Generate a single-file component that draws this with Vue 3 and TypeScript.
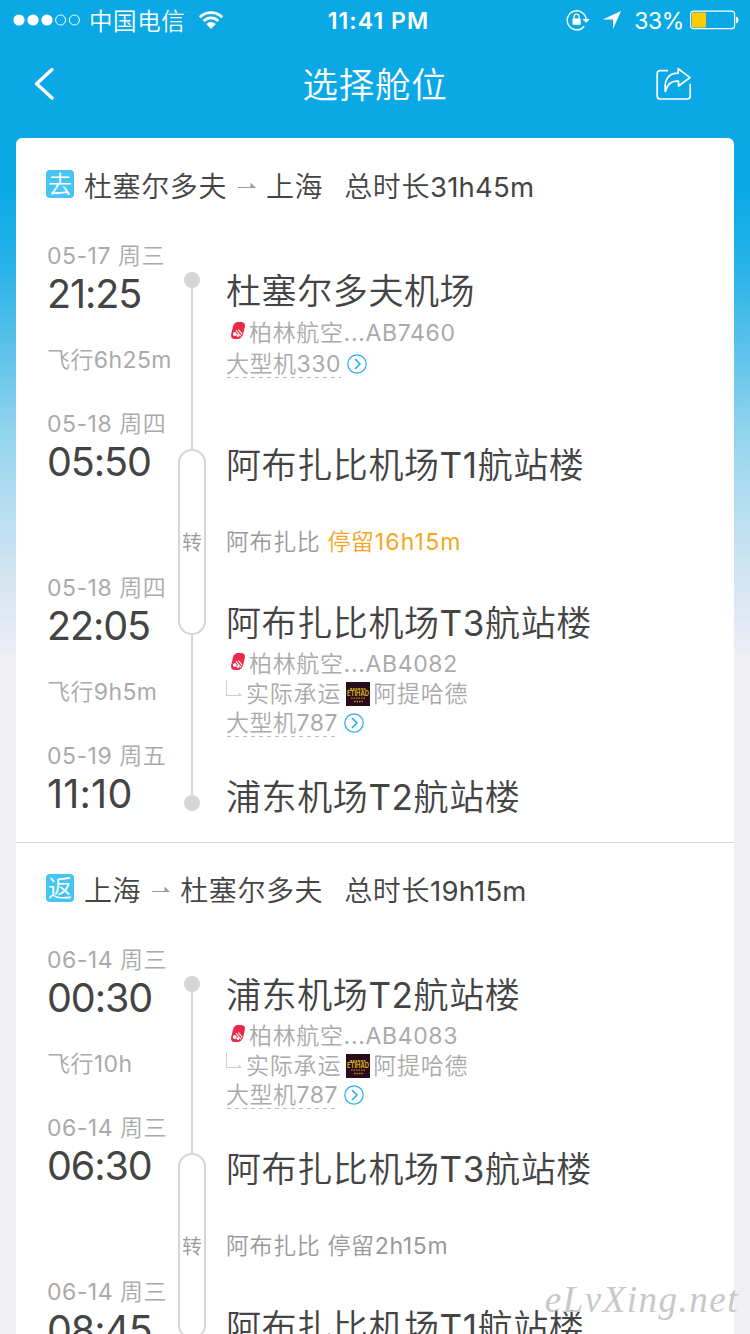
<script setup lang="ts">
import { h, type FunctionalComponent } from 'vue'

interface Stop {
  date: string
  time: string
  place: string
  kind: 'depart' | 'arrive'
  flying?: string
  flight?: string
  plane?: string
  operated?: boolean
  city?: string
  stay?: string
  longStay?: boolean
}

interface Trip {
  badge: string
  from: string
  to: string
  total: string
  stops: Stop[]
}

// Latin letters and digits get their own weight inside Chinese text.
const Mixed: FunctionalComponent<{ text: string }> = (props) =>
  h(
    'span',
    props.text
      .split(/([\x20-\x7e]+)/)
      .filter(Boolean)
      .map((run) => (/^[\x20-\x7e]/.test(run) ? h('span', { class: 'latin' }, run) : run)),
  )
Mixed.props = ['text']

const trips: Trip[] = [
  {
    badge: '去',
    from: '杜塞尔多夫',
    to: '上海',
    total: '31h45m',
    stops: [
      { date: '05-17 周三', time: '21:25', place: '杜塞尔多夫机场', kind: 'depart', flying: '6h25m', flight: 'AB7460', plane: '330' },
      { date: '05-18 周四', time: '05:50', place: '阿布扎比机场T1航站楼', kind: 'arrive', city: '阿布扎比', stay: '16h15m', longStay: true },
      { date: '05-18 周四', time: '22:05', place: '阿布扎比机场T3航站楼', kind: 'depart', flying: '9h5m', flight: 'AB4082', plane: '787', operated: true },
      { date: '05-19 周五', time: '11:10', place: '浦东机场T2航站楼', kind: 'arrive' },
    ],
  },
  {
    badge: '返',
    from: '上海',
    to: '杜塞尔多夫',
    total: '19h15m',
    stops: [
      { date: '06-14 周三', time: '00:30', place: '浦东机场T2航站楼', kind: 'depart', flying: '10h', flight: 'AB4083', plane: '787', operated: true },
      { date: '06-14 周三', time: '06:30', place: '阿布扎比机场T3航站楼', kind: 'arrive', city: '阿布扎比', stay: '2h15m' },
      { date: '06-14 周三', time: '08:45', place: '阿布扎比机场T1航站楼', kind: 'depart' },
    ],
  },
]
</script>

<template>
  <div class="screen">
    <header>
      <div class="status">
        <div class="carrier">
          <svg width="68" height="12" viewBox="0 0 68 12">
            <circle cx="6" cy="6" r="5.6" fill="#fff" />
            <circle cx="20" cy="6" r="5.6" fill="#fff" />
            <circle cx="34" cy="6" r="5.6" fill="#fff" />
            <circle cx="47.6" cy="6" r="5" fill="none" stroke="#fff" />
            <circle cx="61.4" cy="6" r="5" fill="none" stroke="#fff" />
          </svg>
          <span class="operator">中国电信</span>
          <svg class="wifi" width="26" height="20" viewBox="0 0 26 20">
            <path d="M1.8 7.2a15.8 15.8 0 0 1 22.4 0M5.7 11a10.3 10.3 0 0 1 14.6 0" fill="none" stroke="#fff" stroke-width="2.7" />
            <path d="M8.2 14a6.8 6.8 0 0 1 9.6 0L13 19z" fill="#fff" />
          </svg>
        </div>
        <div class="clock">11:41 PM</div>
        <div class="power">
          <svg width="24" height="22" viewBox="0 0 24 22">
            <path d="M18.2 17.2A9.500 9.500 0 1 1 20.2 10.500" fill="none" stroke="#fff" stroke-width="1.4" />
            <path d="M16.4 10h7.4L20.1 13.8z" fill="#fff" />
            <rect x="6.5" y="9.6" width="8.2" height="6.2" rx=".6" fill="#fff" />
            <path d="M8.100 10V7.700a2.500 2.500 0 0 1 5 0V10" fill="none" stroke="#fff" stroke-width="1.2" />
          </svg>
          <svg class="locate" width="20" height="20" viewBox="0 0 20 20">
            <path d="M19 1 11 19V9.400H.8z" fill="#fff" />
          </svg>
          <span class="percent">33%</span>
          <svg class="battery" width="49" height="20" viewBox="0 0 49 20">
            <rect x=".6" y="1.1" width="44" height="17.6" rx="3" fill="none" stroke="#fff" stroke-width="1.2" />
            <rect x="2" y="2.5" width="14" height="15" rx="1" fill="#fc0" />
            <path d="M46 6.7q2.4 0 2.4 3.3T46 13.3z" fill="#fff" />
          </svg>
        </div>
      </div>
      <div class="nav">
        <svg class="back" width="22" height="34" viewBox="0 0 22 34">
          <path d="M20 2.6 4.6 16.8 20 31" fill="none" stroke="#fff" stroke-width="3.4" stroke-linecap="round" stroke-linejoin="round" />
        </svg>
        <h1>选择舱位</h1>
        <svg class="share" width="36" height="34" viewBox="0 0 36 34">
          <path d="M12 3.6H4.2q-3 0-3 3V29q0 3 3 3h27q3 0 3-3V16.8" fill="none" stroke="#fff" stroke-width="1.7" />
          <path d="M22.2 1.7 34 10.6 22.5 19v-4.8Q12.5 12.8 9.3 24.4 7.5 6.3 22.2 6.2z" fill="none" stroke="#fff" stroke-width="1.7" stroke-linejoin="round" />
        </svg>
      </div>
    </header>

    <main>
      <section v-for="trip in trips" :key="trip.badge" class="trip">
        <div class="summary">
          <span class="badge">{{ trip.badge }}</span>
          <span>{{ trip.from }}</span>
          <svg class="arrow" width="20" height="8" viewBox="0 0 20 8">
            <path d="M1 6.5H18.5" stroke="#999" fill="none" />
            <path d="M13.5 6.500V1.500L18.500 6.500z" fill="#999" />
          </svg>
          <span>{{ trip.to }}</span>
          <span class="total">总时长<b>{{ trip.total }}</b></span>
        </div>

        <div class="route">
          <div class="rail">
            <i class="dot"></i>
            <i class="line"></i>
            <div class="transfer"><span>转</span></div>
            <i class="line"></i>
            <i class="dot"></i>
          </div>
          <div v-for="(stop, n) in trip.stops" :key="n" class="stop" :class="stop.kind">
            <div class="when">
              <div class="date"><Mixed :text="stop.date" /></div>
              <div class="time" :class="{ narrow: stop.time.startsWith('11') }">{{ stop.time }}</div>
              <div v-if="stop.flying" class="flying"><Mixed :text="'飞行' + stop.flying" /></div>
            </div>
            <div class="where">
              <h2><Mixed :text="stop.place" /></h2>
              <div v-if="stop.flight" class="details" :class="{ compact: stop.operated }">
                <div class="row airline">
                  <svg width="16" height="20" viewBox="0 0 16 20">
                    <path d="M8 1h3.5q4.3.3 3.3 5l-1.6 7q-1.4 5-5.7 5H5Q.6 18 1.1 13.5L3 5.5Q4.2 1 8 1z" fill="#ec2a48" />
                    <path d="M5.8 9l5.4 6.5M8.3 8.5l4 4.8" stroke="#fff" stroke-width="1.1" />
                    <circle cx="4.8" cy="13" r="1.9" fill="#fff" />
                    <circle cx="8" cy="14.6" r="1.4" fill="#fff" />
                  </svg>
                  <Mixed :text="'柏林航空...' + stop.flight" />
                </div>
                <div v-if="stop.operated" class="row operated">
                  <svg class="elbow" width="17" height="17" viewBox="0 0 17 17">
                    <path d="M.5 0V15.5H15.5" fill="none" stroke="#d0d0d0" />
                    <path d="M12.5 12.5l3.5 3h-3.5z" fill="#d0d0d0" />
                  </svg>
                  <span>实际承运</span>
                  <svg class="etihad" width="24" height="24" viewBox="0 0 24 24">
                    <rect width="24" height="24" fill="#2a0b1c" />
                    <path d="M4 7h16" stroke="#b79210" stroke-width="2.2" stroke-dasharray="2 .7" />
                    <text x="1" y="14" textLength="22" lengthAdjust="spacingAndGlyphs">ETIHAD</text>
                    <path d="M5 16.200h14M8 19.500h9" stroke="#b08b12" stroke-width="1.3" stroke-dasharray="1.5 1" />
                  </svg>
                  <span>阿提哈德</span>
                </div>
                <div class="row plane">
                  <Mixed class="model" :text="'大型机' + stop.plane" />
                  <svg width="20" height="20" viewBox="0 0 20 20">
                    <circle cx="10" cy="10" r="9.2" fill="none" stroke="#2aaee8" stroke-width="1.2" />
                    <path d="M8 5l5 5-5 5" fill="none" stroke="#2aaee8" stroke-width="1.6" />
                  </svg>
                </div>
              </div>
              <div v-if="stop.stay" class="stay">
                {{ stop.city }} <span :class="{ long: stop.longStay }">停留<b>{{ stop.stay }}</b></span>
              </div>
            </div>
          </div>
        </div>
      </section>
    </main>
    <div class="watermark">eLvXing.net</div>
  </div>
</template>

<style>
html, body { overflow: hidden; }
.latin { font-weight: 400; }
</style>

<style scoped>
* { box-sizing: border-box; }
.screen {
  position: relative;
  width: 750px;
  height: 1334px;
  overflow: hidden;
  display: flex;
  flex-direction: column;
  font-family: Inter, "Noto Sans CJK SC", sans-serif;
  font-weight: 350;
  color: #444;
  background: linear-gradient(#0aa9e6 0, #0aa9e6 190px, #2ab3e8 270px, #70c8ec 380px, #90d4ee 430px, #b2dcf0 500px, #d0e4f2 570px, #e8ecf6 645px, #efeff4 655px, #efeff4);
}
svg { display: block; flex: none; }
header { flex: none; height: 138px; color: #fff; }
.status { height: 40px; display: flex; align-items: center; justify-content: space-between; padding: 0 11px 0 13px; }
.carrier, .power { display: flex; align-items: center; width: 290px; }
.power { justify-content: flex-end; }
.operator { font-size: 23.5px; letter-spacing: .6px; margin-left: 8px; line-height: 40px; padding-top: 2px; height: 40px; }
.wifi { margin-left: 13px; }
.clock { font-size: 23px; font-weight: 600; letter-spacing: 1.1px; padding: 2px 0 0 5px; }
.locate { margin: 0 12px; }
.percent { font-size: 23px; font-weight: 400; padding-top: 2px; letter-spacing: -.4px; margin-right: 6px; }
.nav { height: 88px; display: grid; grid-template-columns: 1fr auto 1fr; align-items: center; padding: 0 58px 0 32px; }
.share { justify-self: end; }
h1 { margin: 4px 0 0 26px; font-size: 35.5px; font-weight: 350; letter-spacing: .7px; line-height: 50px; }
main { width: 718px; margin: 0 16px; flex: none; background: #fff; border-radius: 6px 6px 0 0; }
.trip { height: 704px; }
.trip + .trip { border-top: 1px solid #d6d6d6; }
.summary { height: 94px; display: flex; align-items: center; padding-left: 30px; font-size: 28px; letter-spacing: .6px; white-space: nowrap; }
.trip + .trip .summary { margin-top: -1px; }
.badge { width: 28px; height: 28px; margin-right: 10px; margin-top: -2px; border-radius: 4px; background: #46c5f3; color: #fff; font-size: 24px; line-height: 30px; letter-spacing: 0; text-align: center; }
.arrow { margin: 0 9.5px; }
.total { margin-left: 21px; }
.total b { font-weight: 400; font-size: 27.5px; letter-spacing: .2px; }
.route { display: grid; grid-template-columns: 131px 28px 1fr; grid-template-rows: 168px 164px 168px 68px; padding: 8px 0 0 31px; }
.rail { grid-column: 2; grid-row: 1 / 5; padding-top: 32px; display: flex; flex-direction: column; align-items: center; }
.dot { flex: none; width: 16px; height: 16px; border-radius: 50%; background: #d6d6d6; }
.line { flex: none; width: 2px; height: 161px; background: #d6d6d6; }
.transfer { flex: none; width: 28px; height: 186px; border: 2px solid #d6d6d6; border-radius: 14px; display: flex; align-items: center; justify-content: center; padding-bottom: 2px; font-size: 20px; color: #999; }
.transfer + .line { height: 160px; }
.stop { display: contents; }
.when { grid-column: 1; white-space: nowrap; }
.where { grid-column: 3; padding-left: 20px; white-space: nowrap; }
.stop:nth-child(2) > div { grid-row: 1; }
.stop:nth-child(3) > div { grid-row: 2; }
.stop:nth-child(4) > div { grid-row: 3; }
.stop:nth-child(5) > div { grid-row: 4; }
.date { height: 32px; line-height: 32px; font-size: 23px; letter-spacing: .5px; color: #aaa; }
.time { height: 44px; line-height: 44px; font-size: 39.5px; font-weight: 400; letter-spacing: -1.1px; }
.time.narrow { letter-spacing: .2px; }
.flying { margin-top: 28px; line-height: 32px; font-size: 23px; letter-spacing: .4px; color: #aaa; }
h2 { margin: 0; height: 50px; line-height: 50px; font-size: 35px; font-weight: 350; letter-spacing: .6px; }
.depart .where { padding-top: 26px; }
.arrive .where { padding-top: 32px; }
.details, .stay { font-size: 23px; letter-spacing: .65px; color: #aaa; }
.row { height: 32px; display: flex; align-items: center; }
.compact .row { height: 30px; }
.airline { padding-bottom: 2px; }
.airline svg { margin: 0 3px 0 4px; }
.operated span { margin-left: 3px; }
.row.operated { padding-bottom: 3px; letter-spacing: .8px; }
.elbow { margin-top: -7px; }
.etihad { margin: 4px 0 0 5px; }
.etihad text { font-size: 7px; font-weight: 700; letter-spacing: 0; fill: #d8b116; }
.model { height: 28px; line-height: 28px; letter-spacing: .5px; background: repeating-linear-gradient(90deg, transparent 0 1px, #bbb 1px 5px, transparent 5px 8px) 0 100% / 100% 1px no-repeat; }
.plane svg { margin-left: 6px; }
.stay { margin-top: 36px; line-height: 32px; letter-spacing: .6px; color: #999; }
.stay b { font-weight: 400; letter-spacing: .7px; }
.stay .long { color: #f5a623; }
.stay .long b { letter-spacing: 1.2px; }
.watermark { position: absolute; right: 11px; bottom: 12px; font: italic 37px/44px "Liberation Serif", serif; letter-spacing: 1.5px; color: #c8c8c8; }
</style>
